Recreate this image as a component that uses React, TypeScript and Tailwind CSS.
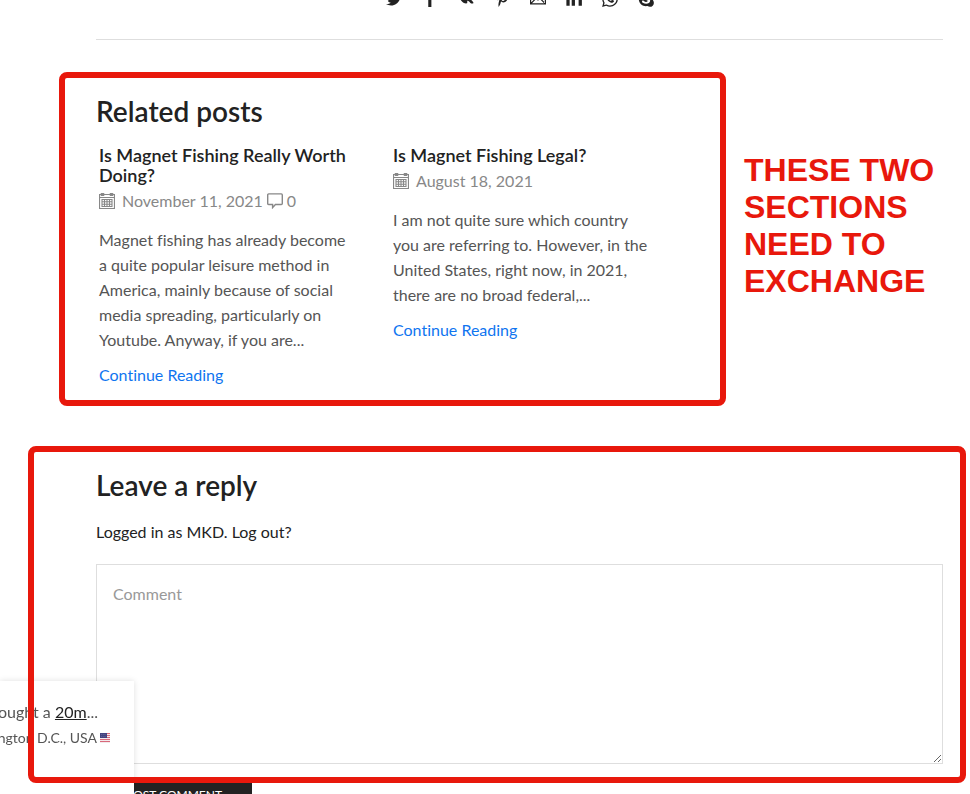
import React from "react";
import {
  FaFacebookF,
  FaLinkedinIn,
  FaPinterestP,
  FaSkype,
  FaTwitter,
  FaVk,
  FaWhatsapp,
} from "react-icons/fa";

const MailIcon = () => (
  <svg viewBox="0 0 16 16" className="size-4" fill="none" stroke="currentColor" strokeWidth="1.2">
    <path d="M.6 2.6h14.8v10.2H.6zM.6 2.8 8 9l7.4-6.2M.8 12.6l5-5M15.2 12.6l-5-5" />
  </svg>
);

const CalendarIcon = () => (
  <svg viewBox="0 0 16 16" className="size-4 shrink-0" fill="none" stroke="currentColor">
    <path d="M.5 1.5h15v14H.5zM.5 4.5h15" strokeWidth="1.2" />
    <path d="M2 .5h3v2H2zM11 .5h3v2h-3z" />
    <path d="M3 6.5h10v7H3zM3 8.8h10M3 11.2h10M5.5 6.5v7M8 6.5v7M10.5 6.5v7" strokeWidth="1.1" />
  </svg>
);

const CommentIcon = () => (
  <svg viewBox="0 0 16 16" className="size-4 shrink-0" fill="none" stroke="currentColor" strokeWidth="1.4">
    <path d="M1.7.9h12.6q1 0 1 1v8.6q0 1-1 1H8.4L5.6 14.6v-3.1H1.7q-1 0-1-1V1.9q0-1 1-1z" />
  </svg>
);

const FlagIcon = () => (
  <svg viewBox="0 0 10 10" className="size-2.5 shrink-0">
    <path fill="#f3e9ec" d="M0 0h10v10H0z" />
    <path stroke="#d8697a" strokeWidth="1" d="M0 .5h10M0 2.5h10M0 4.5h10M0 6.5h10M0 8.5h10" />
    <path fill="#43437f" d="M0 0h7v5H0z" />
    <path stroke="#8484b4" strokeWidth="0.6" strokeDasharray="0.8 1" d="M1 1.5h5.5M1 3.5h5.5" />
  </svg>
);

const shareLinks = [
  { label: "Twitter", icon: <FaTwitter size={16} /> },
  { label: "Facebook", icon: <FaFacebookF size={16} /> },
  { label: "VK", icon: <FaVk size={16} /> },
  { label: "Pinterest", icon: <FaPinterestP size={16} /> },
  { label: "Email", icon: <MailIcon /> },
  { label: "LinkedIn", icon: <FaLinkedinIn size={18} /> },
  { label: "WhatsApp", icon: <FaWhatsapp size={18} /> },
  { label: "Skype", icon: <FaSkype size={18} /> },
];

const posts = [
  {
    title: "Is Magnet Fishing Really Worth Doing?",
    date: "November 11, 2021",
    comments: "0",
    excerpt:
      "Magnet fishing has already become a quite popular leisure method in America, mainly because of social media spreading, particularly on Youtube. Anyway, if you are...",
  },
  {
    title: "Is Magnet Fishing Legal?",
    date: "August 18, 2021",
    excerpt:
      "I am not quite sure which country you are referring to. However, in the United States, right now, in 2021, there are no broad federal,...",
  },
];

// red marker outline drawn over a section
const Marker = () => (
  <div className="pointer-events-none absolute inset-0 z-20 rounded-lg border-6 border-[#e8180c]" />
);

const RelatedPosts = () => (
  <section className="relative w-[667px] shrink-0 pt-[23px] pb-[19px] pl-[37px]">
    <Marker />
    <h2 className="text-[28px] leading-8 font-semibold">Related posts</h2>
    <div className="mt-[18px] ml-[3px] grid max-w-[588px] grid-cols-2">
      {posts.map((post) => (
        <article key={post.title} className="pr-9">
          <h3 className="text-lg leading-5 font-semibold">
            <a href="#">{post.title}</a>
          </h3>
          <div className="flex h-8 items-center text-[#888]">
            <CalendarIcon />
            <span className="ml-[7px]">{post.date}</span>
            {post.comments && (
              <a href="#" className="ml-1 flex items-center gap-1">
                <CommentIcon />
                {post.comments}
              </a>
            )}
          </div>
          <p className="mt-2.5 leading-[25px] text-[#555]">{post.excerpt}</p>
          <a href="#" className="mt-2.5 inline-block leading-[25px] text-[#0f75f0]">
            Continue Reading
          </a>
        </article>
      ))}
    </div>
  </section>
);

const ReplyForm = () => (
  <form className="mt-10 mr-1 ml-7" onSubmit={(e) => e.preventDefault()}>
    <div className="relative pt-[23px] pr-[23px] pb-[19px] pl-[68px]">
      <Marker />
      <h2 className="text-[28px] leading-8 font-semibold">Leave a reply</h2>
      <p className="mt-[18px] leading-[25px]">
        <a href="#">Logged in as MKD</a>. <a href="#">Log out?</a>
      </p>
      <textarea
        aria-label="Comment"
        placeholder="Comment"
        className="mt-5 block h-[200px] w-full resize-y border border-[#dedede] bg-white px-4 py-4 leading-[25px] outline-none placeholder:text-[#999]"
      />
    </div>
    <button
      type="submit"
      className="-mt-1.5 ml-[68px] block h-9 bg-[#222] px-[30px] text-xs text-white uppercase"
    >
      Post comment
    </button>
  </form>
);

const SalePopup = () => (
  <div className="fixed bottom-0 left-0 z-10 h-[113px] w-[134px] overflow-hidden bg-white pt-[18px] whitespace-nowrap text-[#555] shadow-[0_0_6px_rgba(0,0,0,0.13)]">
    <p className="flex justify-end pr-9 leading-[26px]">
      <span>
        bought a{" "}
        <a href="#" className="text-[#222] underline">
          20m
        </a>
        ...
      </span>
    </p>
    <p className="flex items-center justify-end gap-[3px] pr-6 text-sm leading-[26px]">
      <span>Washington D.C., USA</span>
      <FlagIcon />
    </p>
  </div>
);

const App = (): JSX.Element => {
  return (
    <main className="h-screen overflow-hidden bg-white font-['Lato',sans-serif] text-base text-[#222] [font-variant-ligatures:none]">
      <div className="mr-[27px] ml-24 flex h-10 items-start justify-center gap-5 border-b border-[#dedede]">
        {shareLinks.map((link) => (
          <a
            key={link.label}
            href="#"
            aria-label={link.label}
            className="-mt-[9px] flex size-4 items-center justify-center *:shrink-0"
          >
            {link.icon}
          </a>
        ))}
      </div>

      <div className="mt-8 ml-[59px] flex gap-[18px]">
        <RelatedPosts />
        <p className="flex-1 pt-20 font-['Liberation_Sans',sans-serif] text-[32px] leading-[37px] font-bold text-[#e8180c]">
          THESE TWO SECTIONS NEED TO EXCHANGE
        </p>
      </div>

      <ReplyForm />
      <SalePopup />
    </main>
  );
};

export default App;
